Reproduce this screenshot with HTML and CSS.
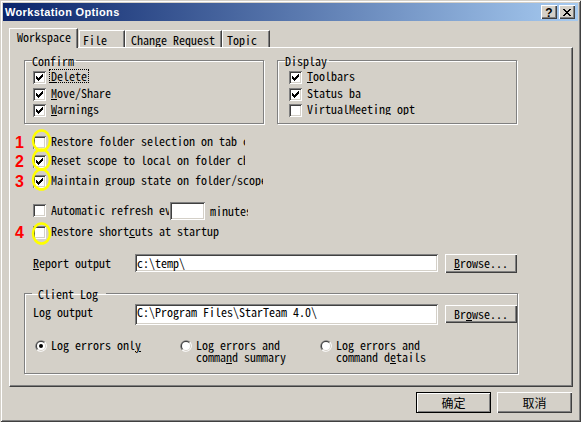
FILE: index.html
```html
<!DOCTYPE html>
<html>
<head>
<meta charset="utf-8">
<link rel="stylesheet" href="styles.css">
</head>
<body>
<div class="window">
  <div class="titlebar">
    <span class="title">Workstation Options</span>
    <span class="tbtn help">?</span>
    <span class="tbtn close"><svg width="8" height="7" viewBox="0 0 8 7"><path d="M0 0h2v1H0zM6 0h2v1H6zM1 1h2v1H1zM5 1h2v1H5zM2 2h4v1H2zM3 3h2v1H3zM2 4h4v1H2zM1 5h2v1H1zM5 5h2v1H5zM0 6h2v1H0zM6 6h2v1H6z"/></svg></span>
  </div>
  <div class="body">
    <div class="tabs">
      <div class="tab active">Workspace</div>
      <div class="tab t-file">File</div>
      <div class="tab t-cr">Change Request</div>
      <div class="tab t-topic">Topic</div>
    </div>
    <div class="panel">
      <div class="groups">
        <fieldset class="group confirm">
          <legend>Confirm</legend>
          <div class="cb-row"><span class="cb"><svg class="chk" width="13" height="13" viewBox="0 0 13 13"><path d="M3 5h1v3H3zM4 6h1v3H4zM5 7h1v3H5zM6 6h1v3H6zM7 5h1v3H7zM8 4h1v3H8zM9 3h1v3H9z"/></svg></span><span class="lbl focus"><u>D</u>elete</span></div>
          <div class="cb-row"><span class="cb"><svg class="chk" width="13" height="13" viewBox="0 0 13 13"><path d="M3 5h1v3H3zM4 6h1v3H4zM5 7h1v3H5zM6 6h1v3H6zM7 5h1v3H7zM8 4h1v3H8zM9 3h1v3H9z"/></svg></span><span class="lbl"><u>M</u>ove/Share</span></div>
          <div class="cb-row"><span class="cb"><svg class="chk" width="13" height="13" viewBox="0 0 13 13"><path d="M3 5h1v3H3zM4 6h1v3H4zM5 7h1v3H5zM6 6h1v3H6zM7 5h1v3H7zM8 4h1v3H8zM9 3h1v3H9z"/></svg></span><span class="lbl"><u>W</u>arnings</span></div>
        </fieldset>
        <fieldset class="group display">
          <legend>Display</legend>
          <div class="cb-row"><span class="cb"><svg class="chk" width="13" height="13" viewBox="0 0 13 13"><path d="M3 5h1v3H3zM4 6h1v3H4zM5 7h1v3H5zM6 6h1v3H6zM7 5h1v3H7zM8 4h1v3H8zM9 3h1v3H9z"/></svg></span><span class="lbl"><u>T</u>oolbars</span></div>
          <div class="cb-row"><span class="cb"><svg class="chk" width="13" height="13" viewBox="0 0 13 13"><path d="M3 5h1v3H3zM4 6h1v3H4zM5 7h1v3H5zM6 6h1v3H6zM7 5h1v3H7zM8 4h1v3H8zM9 3h1v3H9z"/></svg></span><span class="lbl clip w-status"><u>S</u>tatus bar</span></div>
          <div class="cb-row"><span class="cb"></span><span class="lbl clip w-vm"><u>V</u>irtualMeeting options</span></div>
        </fieldset>
      </div>

      <div class="opts">
        <div class="opt o1">
          <span class="num">1</span>
          <span class="cb"><svg class="ring" width="21" height="23" viewBox="0 0 21 23"><ellipse cx="10.5" cy="11.5" rx="8.5" ry="10" fill="none" stroke="#ffff00" stroke-width="2.5"/></svg></span>
          <span class="lbl clip w-long">Restore <u>f</u>older selection on tab change</span>
        </div>
        <div class="opt o2">
          <span class="num">2</span>
          <span class="cb"><svg class="chk" width="13" height="13" viewBox="0 0 13 13"><path d="M3 5h1v3H3zM4 6h1v3H4zM5 7h1v3H5zM6 6h1v3H6zM7 5h1v3H7zM8 4h1v3H8zM9 3h1v3H9z"/></svg><svg class="ring" width="21" height="23" viewBox="0 0 21 23"><ellipse cx="10.5" cy="11.5" rx="8.5" ry="10" fill="none" stroke="#ffff00" stroke-width="2.5"/></svg></span>
          <span class="lbl clip w-long">Reset scope to <u>l</u>ocal on folder change</span>
        </div>
        <div class="opt o3">
          <span class="num">3</span>
          <span class="cb"><svg class="chk" width="13" height="13" viewBox="0 0 13 13"><path d="M3 5h1v3H3zM4 6h1v3H4zM5 7h1v3H5zM6 6h1v3H6zM7 5h1v3H7zM8 4h1v3H8zM9 3h1v3H9z"/></svg><svg class="ring" width="21" height="23" viewBox="0 0 21 23"><ellipse cx="10.5" cy="11.5" rx="8.5" ry="10" fill="none" stroke="#ffff00" stroke-width="2.5"/></svg></span>
          <span class="lbl clip w-longer">Maintain <u>g</u>roup state on folder/scope change</span>
        </div>
        <div class="opt auto">
          <span class="num"></span>
          <span class="cb"></span>
          <span class="lbl clip w-auto">A<u>u</u>tomatic refresh every</span>
          <span class="edit minutes-box"></span>
          <span class="lbl clip w-min">minutes</span>
        </div>
        <div class="opt o4">
          <span class="num">4</span>
          <span class="cb"><svg class="ring low" width="21" height="23" viewBox="0 0 21 23"><ellipse cx="10.5" cy="11.5" rx="8.5" ry="10" fill="none" stroke="#ffff00" stroke-width="2.5"/></svg></span>
          <span class="lbl">Restore short<u>c</u>uts at startup</span>
        </div>
      </div>

      <div class="path-row report">
        <span class="plabel"><u>R</u>eport output</span>
        <span class="edit path">c:\temp\</span>
        <span class="btn browse"><span><u>B</u>rowse...</span></span>
      </div>

      <fieldset class="group clientlog">
        <legend>&nbsp;Client Log&nbsp;</legend>
        <div class="path-row log">
          <span class="plabel">Log output</span>
          <span class="edit path">C:\Program Files\StarTeam 4.0\</span>
          <span class="btn browse"><span>Br<u>o</u>wse...</span></span>
        </div>
        <div class="radios">
          <div class="radio"><svg width="12" height="12" viewBox="0 0 12 12"><path fill="#808080" d="M1.76 10.24A6 6 0 0 1 10.24 1.76Z"/><path fill="#ffffff" d="M10.24 1.76A6 6 0 0 1 1.76 10.24Z"/><path fill="#404040" d="M2.46 9.54A5 5 0 0 1 9.54 2.46Z"/><path fill="#d4d0c8" d="M9.54 2.46A5 5 0 0 1 2.46 9.54Z"/><circle cx="6" cy="6" r="4" fill="#ffffff"/><circle cx="6" cy="6" r="2" fill="#000000"/></svg><span class="rlbl">Log errors onl<u>y</u></span></div>
          <div class="radio"><svg width="12" height="12" viewBox="0 0 12 12"><path fill="#808080" d="M1.76 10.24A6 6 0 0 1 10.24 1.76Z"/><path fill="#ffffff" d="M10.24 1.76A6 6 0 0 1 1.76 10.24Z"/><path fill="#404040" d="M2.46 9.54A5 5 0 0 1 9.54 2.46Z"/><path fill="#d4d0c8" d="M9.54 2.46A5 5 0 0 1 2.46 9.54Z"/><circle cx="6" cy="6" r="4" fill="#ffffff"/></svg><span class="rlbl">Log errors and<br>comma<u>n</u>d summary</span></div>
          <div class="radio"><svg width="12" height="12" viewBox="0 0 12 12"><path fill="#808080" d="M1.76 10.24A6 6 0 0 1 10.24 1.76Z"/><path fill="#ffffff" d="M10.24 1.76A6 6 0 0 1 1.76 10.24Z"/><path fill="#404040" d="M2.46 9.54A5 5 0 0 1 9.54 2.46Z"/><path fill="#d4d0c8" d="M9.54 2.46A5 5 0 0 1 2.46 9.54Z"/><circle cx="6" cy="6" r="4" fill="#ffffff"/></svg><span class="rlbl">Log errors and<br>command d<u>e</u>tails</span></div>
        </div>
      </fieldset>
    </div>
    <div class="footer">
      <span class="btn dlg default">确定</span>
      <span class="btn dlg">取消</span>
    </div>
  </div>
</div>
</body>
</html>
```

FILE: styles.css
```css
* { box-sizing: border-box; }
html, body { margin: 0; padding: 0; }
body {
  width: 581px;
  height: 422px;
  overflow: hidden;
  background: #d4d0c8;
  color: #000;
  font-family: "Noto Sans Mono CJK SC", "Liberation Mono", monospace;
  font-size: 12px;
  line-height: 12px;
}
u { text-decoration-thickness: 1px; }

.window {
  width: 581px;
  height: 422px;
  padding: 3px;
  display: flex;
  flex-direction: column;
  background: #d4d0c8;
  box-shadow: inset 1px 1px 0 #d4d0c8, inset -1px -1px 0 #404040,
              inset 2px 2px 0 #ffffff, inset -2px -2px 0 #808080;
}

/* title bar */
.titlebar {
  height: 18px;
  flex: none;
  display: flex;
  align-items: flex-start;
  padding: 2px 3px 0 2px;
  background: linear-gradient(to right, #0a246a, #a6caf0);
}
.title {
  flex: 1;
  font: bold 11px/14px "Liberation Sans", Arial, sans-serif;
  letter-spacing: 0.35px;
  color: #fff;
  white-space: nowrap;
}
.tbtn {
  width: 16px;
  height: 14px;
  display: flex;
  align-items: center;
  justify-content: center;
  background: #d4d0c8;
  box-shadow: inset 1px 1px 0 #ffffff, inset -1px -1px 0 #404040, inset -2px -2px 0 #808080;
  font: bold 12px/14px "Liberation Sans", Arial, sans-serif;
}
.tbtn.help { margin-right: 2px; padding-top: 1px; }
.tbtn svg { display: block; }

/* body */
.body {
  flex: 1;
  display: flex;
  flex-direction: column;
  padding: 7px 5px 0 6px;
}

/* tabs */
.tabs {
  height: 19px;
  display: flex;
  align-items: flex-end;
}
.tab {
  height: 17px;
  padding: 3px 0 0 4px;
  border-top: 1px solid #fff;
  border-left: 1px solid #fff;
  border-right: 1px solid #404040;
  box-shadow: inset -1px 0 0 #808080;
  white-space: nowrap;
}
.tab.active {
  width: 69px;
  height: 20px;
  margin-bottom: -1px;
  padding: 2px 0 0 7px;
  position: relative;
  z-index: 1;
  background: #d4d0c8;
}
.t-file { width: 46px; margin-left: 1px; padding-left: 3px; }
.t-cr { width: 97px; margin-left: 0; padding-left: 5px; }
.t-topic { width: 48px; padding-left: 4px; }

/* panel */
.panel {
  height: 340px;
  flex: none;
  border: 1px solid;
  border-color: #fff #404040 #404040 #fff;
  box-shadow: inset -1px -1px 0 #808080;
  padding-top: 6px;
}

/* group boxes */
.groups {
  display: flex;
  gap: 13px;
  margin-left: 14px;
}
fieldset.group {
  margin: 0;
  min-width: 0;
  width: 240px;
  border: 1px solid #808080;
  box-shadow: inset 1px 1px 0 #fff, 1px 1px 0 #fff;
  padding: 4px 7px 2px 7px;
}
legend {
  padding: 0 2px 0 0;
  line-height: 13px;
  white-space: nowrap;
}
.cb-row {
  display: flex;
  align-items: flex-start;
  height: 16.5px;
}
.confirm .cb-row { margin-left: 1px; }
.display .cb-row { margin-left: 4px; }

.cb {
  position: relative;
  flex: none;
  width: 13px;
  height: 13px;
  background: #fff;
  box-shadow: inset 1px 1px 0 #808080, inset -1px -1px 0 #ffffff,
              inset 2px 2px 0 #404040, inset -2px -2px 0 #d4d0c8;
}
.cb .chk { display: block; }
.ring {
  position: absolute;
  left: -2px;
  top: -7px;
}
.ring.low { top: -4px; }

.lbl {
  margin-left: 3px;
  margin-top: -2px;
  padding: 0 1px;
  border: 1px dotted transparent;
  white-space: nowrap;
}
.lbl.focus { border-color: #000; }
.clip { overflow: hidden; flex: none; }
.w-status { width: 57px; }
.w-vm { width: 113px; }
.w-long { width: 197px; }
.w-longer { width: 215px; }
.w-auto { width: 121px; }
.w-min { width: 41px; }

/* option rows */
.opts { display: flex; flex-direction: column; }
.opt {
  display: flex;
  align-items: flex-start;
  height: 13px;
}
.num {
  flex: none;
  width: 23px;
  padding-right: 9px;
  text-align: right;
  color: #ff0000;
  font: bold 16px/13px "Liberation Sans", Arial, sans-serif;
}
.o1 { margin-top: 12px; }
.o2 { margin-top: 6px; }
.o3 { margin-top: 7px; }
.auto { margin-top: 14px; height: 18px; }
.auto .cb { margin-top: 2px; }
.auto .lbl { margin-top: 1px; }
.auto .w-min { margin-top: 2px; margin-left: 3px; }
.o4 { margin-top: 6px; }

/* edit boxes */
.edit {
  flex: none;
  display: block;
  background: #fff;
  box-shadow: inset 1px 1px 0 #808080, inset -1px -1px 0 #ffffff,
              inset 2px 2px 0 #404040, inset -2px -2px 0 #d4d0c8;
  white-space: nowrap;
  overflow: hidden;
}
.minutes-box { width: 35px; height: 18px; }

.path-row {
  display: flex;
  align-items: flex-start;
}
.plabel {
  flex: none;
  width: 102px;
  white-space: nowrap;
}
.edit.path { width: 303px; padding-left: 2px; }
.report {
  margin-top: 15px;
  padding-left: 23px;
}
.report .plabel { margin-top: 3px; }
.report .edit { height: 18px; padding-top: 3px; }
.report .browse { height: 19px; }
.log { margin-left: 1px; }
.log .plabel { margin-top: 2px; }
.log .edit { height: 21px; padding-top: 2px; }
.log .browse { height: 18px; margin-top: 1px; }

.btn {
  flex: none;
  display: flex;
  align-items: center;
  justify-content: center;
  background: #d4d0c8;
  box-shadow: inset 1px 1px 0 #ffffff, inset -1px -1px 0 #404040, inset -2px -2px 0 #808080;
  white-space: nowrap;
}
.browse { width: 72px; margin-left: 7px; }

/* client log */
fieldset.clientlog {
  width: 494px;
  margin: 14px 0 0 14px;
  padding: 4px 7px 10px 7px;
}
.radios {
  display: grid;
  grid-template-columns: 145px 140px auto;
  margin: 15px 0 0 3px;
}
.radio {
  display: flex;
  align-items: flex-start;
}
.radio svg { display: block; flex: none; }
.rlbl {
  margin: -1px 0 0 2px;
  padding: 0 2px;
  white-space: nowrap;
}

/* footer */
.footer {
  display: flex;
  justify-content: flex-end;
  gap: 6px;
  margin-top: 5px;
  padding-right: 1px;
}
.dlg {
  width: 75px;
  height: 21px;
  font-family: "Noto Sans CJK SC", sans-serif;
  font-size: 12px;
  line-height: 12px;
}
.dlg.default {
  border: 1px solid #000;
  box-shadow: inset 1px 1px 0 #ffffff, inset -1px -1px 0 #808080;
}
```
